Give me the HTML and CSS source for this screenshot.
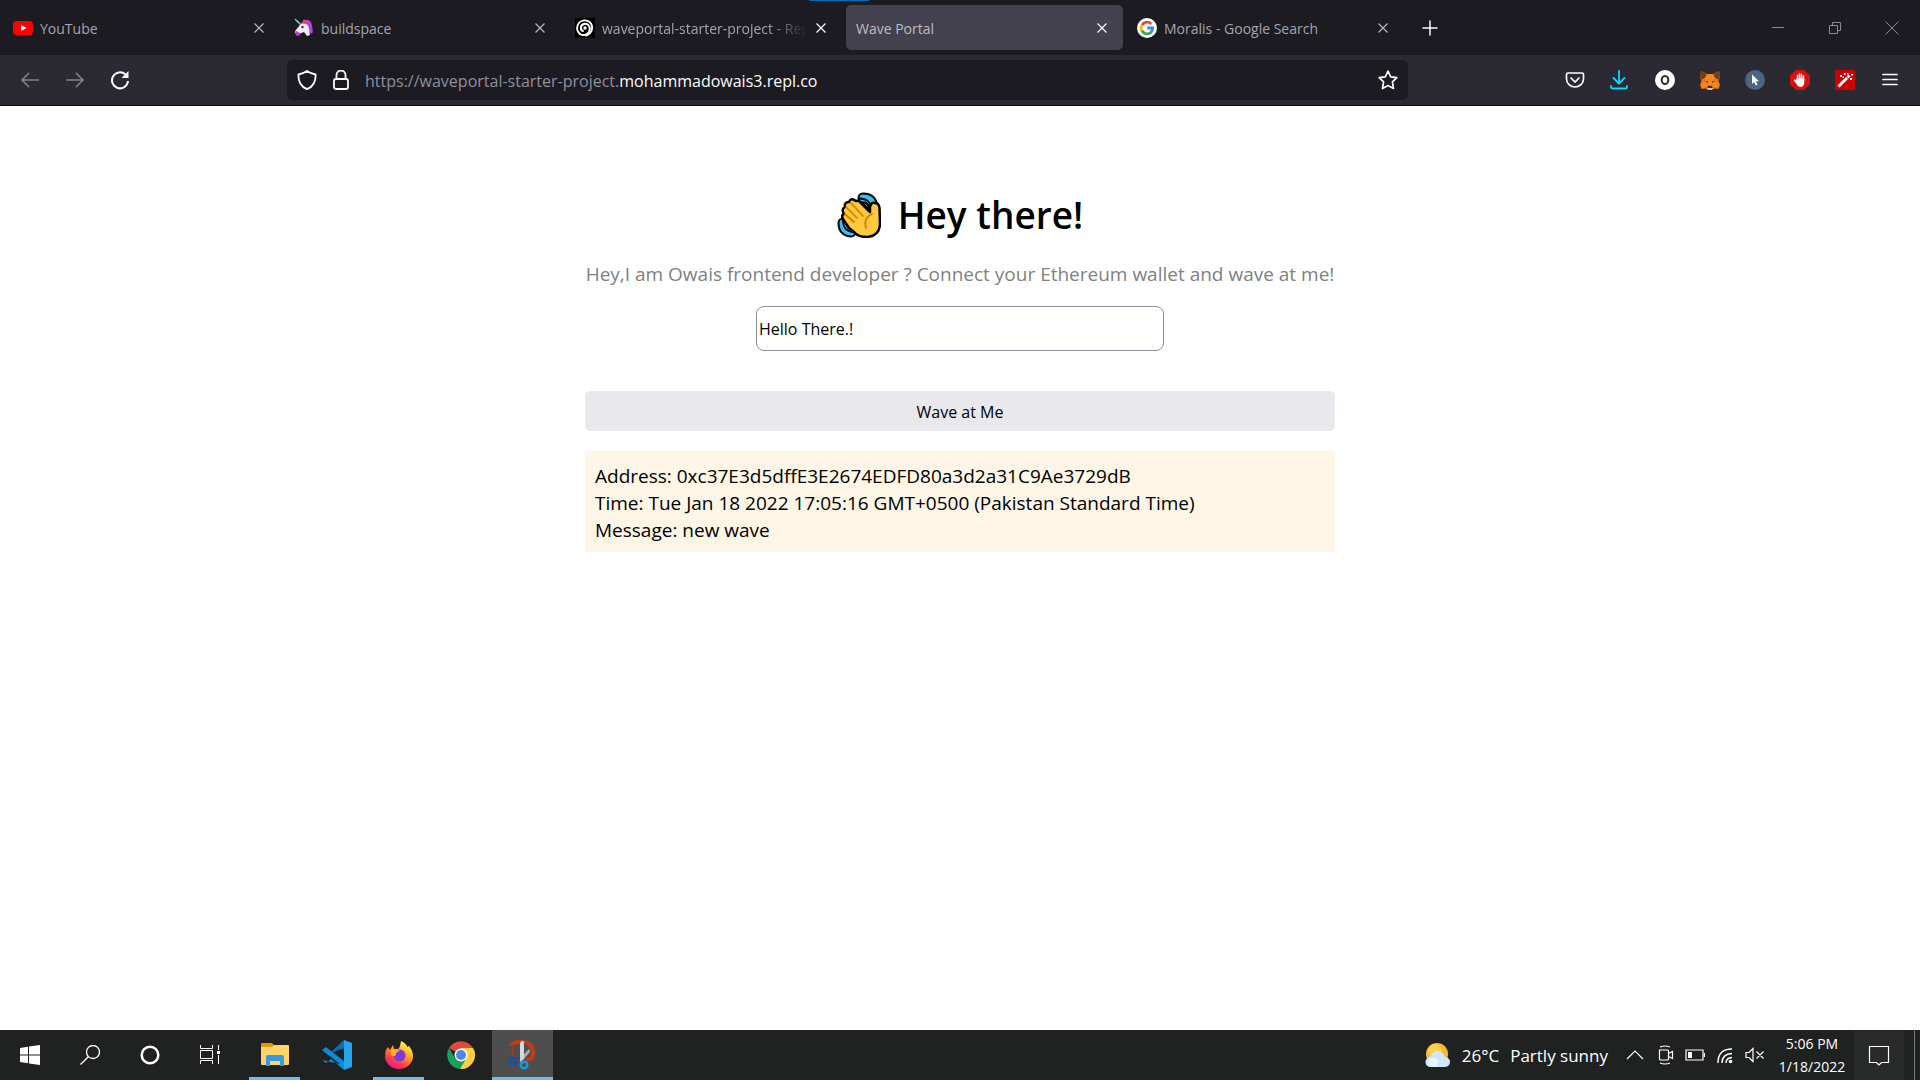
FILE: index.html
```html
<!DOCTYPE html>
<html lang="en">
<head>
<meta charset="utf-8">
<title>Wave Portal</title>
<link rel="stylesheet" href="styles.css">
</head>
<body>
<svg class="defs" aria-hidden="true">
  <symbol id="close" viewBox="0 0 12 12"><path d="M1.500 1.500l9 9M10.500 1.500l-9 9" stroke="currentColor" stroke-width="1.200" fill="none"/></symbol>
</svg>
<header class="browser">
  <nav class="tab-bar" aria-label="Tabs">
    <div class="tab">
      <svg class="favicon" viewBox="0 0 20 20"><rect x="0" y="3" width="20" height="14" rx="3.500" fill="#f00"/><path d="M8 7l5.500 3L8 13z" fill="#fff"/></svg>
      <a class="tab-title" href="#">YouTube</a>
      <button class="tab-close" aria-label="Close YouTube"><svg><use href="#close"/></svg></button>
    </div>
    <div class="tab">
      <svg class="favicon" viewBox="0 0 20 20">
        <path d="M8 3c6-3 10 0 10 5 1 4 1 6 0 8l-3-2-4-8z" fill="#b43fd6"/>
        <path d="M6 6c5-2 9 1 9 5l1 6-3 1-3-4-5 2-4-1c-1-3 4-5 5-9z" fill="#f1e8f6"/>
        <path d="M1.500 12.500l5 3c-1 3-4 3-5 1z" fill="#b43fd6"/>
        <path d="M8 5l2-4 2 3 2-2-1 4zM4 4l4 1-2 2z" fill="#df4a6c"/>
        <path d="M1 1l5 5" stroke="#4fd4a1" stroke-width="1.500"/><path d="M3 3l1 1" stroke="#ffd15c" stroke-width="1.500"/>
        <circle cx="8.500" cy="9" r="1.200" fill="#333"/>
      </svg>
      <a class="tab-title" href="#">buildspace</a>
      <button class="tab-close" aria-label="Close buildspace"><svg><use href="#close"/></svg></button>
    </div>
    <div class="tab">
      <svg class="favicon" viewBox="0 0 20 20"><path fill="#000" d="M0 0h20v20H0z"/><g fill="none" stroke="#fff" stroke-linecap="round"><path stroke-width="2" d="M8 13c-3-1-3-6 1-7 5-1 7 4 5 8-2 3-6 4-9 2"/><path stroke-width="1.800" d="M5 16C0 12 2 4 8 2.500q5-1 8 3c3 5 0 11-5 12"/></g><circle cx="10" cy="10" r="1.700" fill="#fff"/></svg>
      <a class="tab-title fade" href="#">waveportal-starter-project - Replit</a>
      <button class="tab-close bright" aria-label="Close waveportal-starter-project"><svg><use href="#close"/></svg></button>
    </div>
    <div class="tab active">
      <a class="tab-title" href="#">Wave Portal</a>
      <button class="tab-close bright" aria-label="Close Wave Portal"><svg><use href="#close"/></svg></button>
    </div>
    <div class="tab">
      <svg class="favicon" viewBox="0 0 20 20"><circle cx="10" cy="10" r="10" fill="#fff"/><g fill="none" stroke-width="2.800"><path d="M5 7.200A5.700 5.700 0 0 1 14.200 6" stroke="#ea4335"/><path d="M5 7A6 6 0 0 0 5 13" stroke="#fbbc05"/><path d="M4.900 12.700A5.800 5.800 0 0 0 14 14.300" stroke="#34a853"/><path d="M10.200 10h5.500q0 2.800-2 4.600" stroke="#4285f4"/></g></svg>
      <a class="tab-title" href="#">Moralis - Google Search</a>
      <button class="tab-close" aria-label="Close Moralis"><svg><use href="#close"/></svg></button>
    </div>
    <button class="new-tab" aria-label="New tab"><svg viewBox="0 0 16 16"><path d="M8 .5v15M.5 8h15" stroke="#fbfbfe" stroke-width="1.500"/></svg></button>
    <div class="window-controls">
      <button aria-label="Minimize"><svg viewBox="0 0 14 14"><path d="M1 6.500h12"/></svg></button>
      <button aria-label="Restore"><svg viewBox="0 0 14 14"><path d="M1.500 4.500h8v8h-8zM4.500 4.500v-3h8v8h-3"/></svg></button>
      <button aria-label="Close"><svg viewBox="0 0 14 14"><path d="M.5 .5l13 13M13.500 .5l-13 13"/></svg></button>
    </div>
    <span class="drag-mark"></span>
  </nav>
  <div class="toolbar">
    <div class="nav-buttons">
      <button class="dim" aria-label="Back"><svg viewBox="0 0 20 20"><path d="M19 10H2M9 3l-7 7 7 7"/></svg></button>
      <button class="dim" aria-label="Forward"><svg viewBox="0 0 20 20"><path d="M1 10h17M11 3l7 7-7 7"/></svg></button>
      <button aria-label="Reload"><svg viewBox="0 0 20 20"><path stroke-width="2" d="M18 11a8 8 0 1 1-2.500-6.500"/><path d="M18.500 1v7h-7z" fill="currentColor" stroke="none"/></svg></button>
    </div>
    <div class="address">
      <button aria-label="Protection"><svg viewBox="0 0 20 20"><path stroke-width="1.800" d="M10 1c3 2 5 3 8.500 3.500C19 11 16 17 10 19.200 4 17 1 11 1.500 4.500 5 4 7 3 10 1z"/></svg></button>
      <button aria-label="Connection secure"><svg viewBox="0 0 20 20"><rect x="3" y="9" width="14" height="10" rx="2" stroke-width="1.800"/><path stroke-width="1.800" d="M5.500 9V5a4.500 4.500 0 0 1 9 0v4"/></svg></button>
      <div class="url" role="textbox" aria-label="Address">https://waveportal-starter-project.<span>mohammadowais3.repl.co</span></div>
      <button aria-label="Bookmark"><svg viewBox="0 0 20 20"><path stroke-width="1.700" stroke-linejoin="round" d="M10 1.200l2.700 5.600 6.200.8-4.500 4.300 1.100 6.600L10 15.600l-5.500 2.900 1.100-6.600L1.100 7.600l6.200-.8z"/></svg></button>
    </div>
    <div class="extensions">
      <button aria-label="Pocket"><svg viewBox="0 0 20 20"><path stroke-width="1.700" d="M3 3h14q1.500 0 1.500 1.500V9a8.500 8 0 0 1-17 0V4.500Q1.500 3 3 3z"/><path stroke-width="1.700" stroke-linecap="round" d="M6 8l4 4 4-4"/></svg></button>
      <button class="cyan" aria-label="Downloads"><svg viewBox="0 0 20 20"><path stroke-width="1.800" stroke-linecap="round" stroke-linejoin="round" d="M9 1v12M3.500 8L9 13.500 14.500 8M1 16v1q0 1.500 1.500 1.500h13q1.500 0 1.500-1.500v-1"/></svg></button>
      <button aria-label="Extension O"><svg viewBox="0 0 20 20"><circle cx="10" cy="10" r="10" fill="#fff" stroke="none"/><ellipse cx="10" cy="10" rx="3.300" ry="4" stroke="#2b2a33" stroke-width="2"/></svg></button>
      <button aria-label="MetaMask"><svg viewBox="0 0 20 20" stroke="none"><path fill="#e2761b" d="M1 1l6 3h6l6-3 1 6-1.500 4 1.500 4-1.500 4-4-.5L12 20H8l-2.500-1.500-4 .5L0 15l1.500-4L0 7z"/><path fill="#763d16" d="M1 1l6 3.500L5 8 1 9.500 0 6zM19 1l-6 3.500L15 8l4 1.500L20 6z"/><path fill="#f6851b" d="M7 4h6l2 4-3 7H8L5 8zM1 13l5-1 2 5-6 1zM19 13l-5-1-2 5 6 1z"/><path fill="#233447" d="M5.500 11l2.500.5-.5 1.500zM14.500 11l-2.500.5.5 1.500zM8 16h4l.5 2h-5z"/><path fill="#d7c1b3" d="M7 18h6l-1.500 2h-3z"/></svg></button>
      <button aria-label="Cursor extension"><svg viewBox="0 0 20 20" stroke="none"><circle cx="10" cy="10" r="10" fill="#4c6486"/><path fill="#fff" d="M7 4.500v9.500l2-2 1.700 3.500 1.800-.9-1.600-3.300H14z"/></svg></button>
      <button aria-label="Ad blocker"><svg viewBox="0 0 20 20" stroke="none"><path fill="#e40d0d" d="M6 0h8l6 6v8l-6 6H6l-6-6V6z"/><path d="M7.500 10V5.500M9.500 9V3.800M11.500 9V4.200M13.500 10V6M6 12l-1.500-2" stroke="#fff" stroke-width="1.500" stroke-linecap="round"/><path fill="#fff" d="M6.700 8.500h7.600V12q0 4.500-3.500 5-3 0-4.300-3l-1.500-3z"/></svg></button>
      <button aria-label="Magic wand"><svg viewBox="0 0 20 20" stroke="none"><rect width="20" height="20" rx="1" fill="#cc0202"/><path d="M3.500 16.500L12 8" stroke="#fff" stroke-width="2.800"/><path d="M12.500 7.500l2-2" stroke="#fff" stroke-width="2.500"/><path fill="#fff" d="M5 5h2v2H5zM9 3h1.500v2H9zM12 3h1.500v1.500H12zM16 4h2v1.500h-2zM15 8h2v2h-2zM7.500 6.500h1.500V8H7.500z"/></svg></button>
      <button aria-label="Menu"><svg viewBox="0 0 20 20"><path stroke-width="1.700" stroke-linecap="round" d="M3 4.500h14M3 9.500h14M3 14.500h14"/></svg></button>
    </div>
  </div>
</header>

<main class="page">
  <div class="content">
    <h1 class="title">
      <svg class="wave" viewBox="0 0 44 46" role="img" aria-label="Waving hand">
        <g fill="none"><path stroke="#000" stroke-width="11" stroke-linecap="round" d="M26 6q9 0 10 9M6 31q0 8 8 9"/><path stroke="#35c1f1" stroke-width="7" stroke-linecap="round" d="M26 6q9 0 10 9M6 31q0 8 8 9"/><path stroke="#000" stroke-width="1.800" d="M22 6.500q12 0 13 12M6 28q0 11 10 12M21 11q9 0 10 9M11 30q0 6 7 7"/></g>
        <path fill="#ffc83d" stroke="#000" stroke-width="2.500" stroke-linejoin="round" d="M12 36L6 27q-2-4 1-5-3-5 1-7-1-5 4-5 2-5 7-1 3-1 5 2l9 9v-5q1-5 5-4 4 0 4.500 5l.5 15q0 13-13 14-9 0-13-5z"/>
        <path fill="none" stroke="#d67d00" stroke-width="1.700" stroke-linecap="round" d="M8 22l9 8M9 15l11 11M14 11l12 13M35 22q-9 4-6 14"/>
      </svg>
      Hey there!
    </h1>
    <p class="bio">Hey,I am Owais frontend developer ? Connect your Ethereum wallet and wave at me!</p>
    <input class="message" type="text" value="Hello There.!" aria-label="Message">
    <button class="wave-button">Wave at Me</button>
    <section class="wave-card">
      <div>Address: 0xc37E3d5dffE3E2674EDFD80a3d2a31C9Ae3729dB</div>
      <div>Time: Tue Jan 18 2022 17:05:16 GMT+0500 (Pakistan Standard Time)</div>
      <div>Message: new wave</div>
    </section>
  </div>
</main>

<footer class="taskbar">
  <div class="system-buttons">
    <button aria-label="Start"><svg viewBox="0 0 20 20"><path fill="#fff" d="M0 3l8-1.200V9.500H0zM9 1.600L20 0v9.500H9zM0 10.500h8v7.700L0 17zM9 10.500h11V20L9 18.400z"/></svg></button>
    <button aria-label="Search"><svg viewBox="0 0 20 20"><g fill="none" stroke="#fff" stroke-width="1.300"><circle cx="13" cy="7" r="6.500"/><path d="M8.300 11.700L.5 19.500"/></g></svg></button>
    <button aria-label="Cortana"><svg viewBox="0 0 20 20"><circle cx="10" cy="10" r="8.300" fill="none" stroke="#fff" stroke-width="2.500"/></svg></button>
    <button aria-label="Task view"><svg viewBox="0 0 20 20"><path fill="none" stroke="#fff" d="M.5 0v3.500h12V0M.5 5.500h12v8H.5zM.5 19v-3.500h12V19M18.500 0v5M18.500 10v9"/><path fill="#fff" d="M17 6h3v3h-3z"/></svg></button>
  </div>
  <div class="apps">
    <button class="running" aria-label="File Explorer"><svg viewBox="0 0 30 30"><path fill="#e09a00" d="M1 4q0-1 1-1h10l2 2v4H1z"/><path fill="#ffd566" d="M1 7h11l2-2h14q1 0 1 1v18q0 1-1 1H2q-1 0-1-1z"/><path fill="#3c97de" d="M6 26V17q0-2 2-2h14q2 0 2 2v9h-4v-5h-10v5z"/></svg></button>
    <button aria-label="Visual Studio Code"><svg viewBox="0 0 30 30"><path fill="#0072ba" d="M22 0L9 12 4 8 0 10l6 5 3-2L22 8z"/><path fill="#0b8bd5" d="M0 20l4 3 5-4 13 11V21L4 7 0 10l18 14z"/><path fill="#25a5ef" d="M22 0l8 3v24l-8 3z"/></svg></button>
    <button class="running" aria-label="Firefox"><svg viewBox="0 0 30 30"><defs><linearGradient id="ff" x1=".8" y1=".1" x2=".3" y2="1"><stop offset="0" stop-color="#fff44f"/><stop offset=".4" stop-color="#ff9a20"/><stop offset=".75" stop-color="#ff374f"/><stop offset="1" stop-color="#e41b8e"/></linearGradient></defs><path fill="url(#ff)" d="M17 1q6 3 6 6l2-1q4 5 4 10a14 13 0 0 1-28 0q0-6 3-9l2 3 3-5 1 4h4q2-1 3-8z"/><circle cx="15.500" cy="15.500" r="6" fill="#7b3bd5"/><path fill="#ffab26" d="M7 10q5-2 9 1-4 1-4 3 0 2-3 2-3-1-2-6z"/></svg></button>
    <button aria-label="Chrome"><svg viewBox="0 0 30 30"><path fill="#db4c3f" d="M15 15L3 8a14 14 0 0 1 24 0z"/><path fill="#ffce43" d="M15 15V8h12.100A14 14 0 0 1 14 29z"/><path fill="#17a05e" d="M15 15l5 4-6 10A14 14 0 0 1 3 8l6 10z"/><circle cx="15" cy="15" r="6.500" fill="#fff"/><circle cx="15" cy="15" r="5" fill="#4a87f5"/></svg></button>
    <button class="running current" aria-label="Snipping Tool"><svg viewBox="0 0 30 30"><path fill="#cc3b0d" d="M2 4q3-4 10-4 13 0 15 11 1 9-7 11l-3-3q7-1 6-8-2-8-10-8-5 2-10 3-2 0-1-2z"/><path fill="none" stroke="#a83a1c" stroke-width="2" d="M6 7q-4 6 1 11l5 3"/><path fill="#d5d8da" d="M12 3q2-4 4-1v17l-4 3z"/><path fill="#a9acae" d="M21 9q2 2 0 4l-5 6v-5z"/><g fill="none" stroke-width="2.500"><circle cx="5" cy="21" r="3.300" stroke="#0b55ad"/><circle cx="16" cy="25" r="3.300" stroke="#1b94e5"/><path d="M8 19l4-1" stroke="#0b55ad"/></g></svg></button>
  </div>
  <div class="tray">
    <button class="weather"><svg viewBox="0 0 26 26"><circle cx="12" cy="12" r="11" fill="#fdb92e"/><circle cx="10" cy="9" r="7" fill="#ffd04b"/><path fill="#cfe8fa" d="M6 25a5 5 0 0 1-1-10q2-6 8-6 5 0 7 6a5 5 0 0 1 0 10z"/><path fill="#fff" opacity=".5" d="M6 25a5 5 0 0 1 0-9q5-1 8 3l-3 6z"/></svg><span>26°C</span><span>Partly sunny</span></button>
    <div class="tray-icons">
      <button aria-label="Show hidden icons"><svg viewBox="0 0 20 20"><path d="M2 14l8-8 8 8"/></svg></button>
      <button aria-label="Meet now"><svg viewBox="0 0 20 20"><path d="M4.500 5h8q1 0 1 1v8q0 1-1 1h-7q-1 0-1-1zM13.500 8.500l4-2v7l-4-2M5 2q5-2 10 0M5 18q5 2 10 0"/></svg></button>
      <button aria-label="Battery"><svg viewBox="0 0 20 20"><path d="M1 5h17v10H1zM19.500 8v4"/><path fill="#fff" stroke="none" d="M3 7h4v6H3z"/></svg></button>
      <button aria-label="Network"><svg viewBox="0 0 20 20"><path d="M3 18Q3 4 17 4M7 18q0-9 10-9.500M11 18q0-5 6-5.500" stroke-width="1.400"/><circle cx="15.500" cy="16.500" r="1.800" fill="#fff" stroke="none"/></svg></button>
      <button aria-label="Volume muted"><svg viewBox="0 0 20 20"><path d="M1 7.500h3l4-4v13l-4-4H1zM11.500 6.500l7 7M18.500 6.500l-7 7"/></svg></button>
    </div>
    <button class="clock"><span>5:06 PM</span><span>1/18/2022</span></button>
    <button class="notifications" aria-label="Notifications"><svg viewBox="0 0 22 22"><path d="M1.500 2.500h19v16h-7l-2.500 2.500-2.500-2.500h-7z"/></svg></button>
    <button class="show-desktop" aria-label="Show desktop"></button>
  </div>
</footer>
</body>
</html>
```
FILE: styles.css
```css
* { box-sizing: border-box; }

body {
  margin: 0;
  min-height: 100vh;
  display: flex;
  flex-direction: column;
  background: #fff;
  font-family: "Open Sans", "Noto Sans", sans-serif;
}

button {
  border: 0;
  padding: 0;
  background: none;
  color: inherit;
  font: inherit;
}

svg { display: block; }
.defs { display: none; }

/* Browser chrome */
.browser { color: #fbfbfe; border-bottom: 1px solid #0c0c0d; }

.tab-bar {
  position: relative;
  display: flex;
  align-items: center;
  gap: 4px;
  height: 55px;
  padding-left: 3px;
  background: #1c1b22;
  font-size: 14px;
}

.tab {
  flex: 0 1 277px;
  min-width: 0;
  height: 45px;
  display: flex;
  align-items: center;
  gap: 7px;
  padding: 0 15px 0 10px;
  border-radius: 5px;
}
.tab.active { background: #42414d; }

.favicon { flex: none; width: 20px; height: 20px; }

.tab-title {
  flex: 1;
  min-width: 0;
  padding-top: 2px;
  overflow: hidden;
  white-space: nowrap;
  line-height: 20px;
  color: #a5a5ac;
  text-decoration: none;
}
.tab.active .tab-title { color: #bdbdc4; }
.tab-title.fade {
  -webkit-mask-image: linear-gradient(to left, transparent, #000 40px);
  mask-image: linear-gradient(to left, transparent, #000 40px);
}

.tab-close { flex: none; color: #b4b4ba; }
.tab-close.bright { color: #fbfbfe; }
.tab-close svg { width: 12px; height: 12px; }

.new-tab { margin-left: 14px; }
.new-tab svg { width: 16px; height: 16px; }

.window-controls {
  display: flex;
  align-items: center;
  margin: 0 0 0 auto;
}
.window-controls button {
  width: 57px;
  display: flex;
  justify-content: center;
}
.window-controls svg {
  width: 14px;
  height: 14px;
  fill: none;
  stroke: #8c8b90;
}

.drag-mark {
  position: absolute;
  top: 0;
  left: 809px;
  width: 60px;
  height: 1px;
  background: #0067b8;
}

.toolbar {
  display: grid;
  grid-template-columns: 287fr 1121fr 512fr;
  align-items: center;
  height: 50px;
  background: #2b2a33;
}
.toolbar svg {
  width: 20px;
  height: 20px;
  fill: none;
  stroke: currentColor;
  stroke-width: 1.5px;
}
.toolbar svg[stroke="none"] { stroke: none; }

.nav-buttons { display: flex; gap: 25px; padding-left: 20px; }
.dim { color: #85848b; }
.cyan { color: #00ddff; }

.address {
  display: flex;
  align-items: center;
  height: 40px;
  gap: 14px;
  padding: 0 10px;
  border-radius: 5px;
  background: #1c1b22;
}
.url {
  flex: 1;
  padding-top: 2px;
  font-size: 16px;
  line-height: 24px;
  color: #8f8f9d;
  white-space: nowrap;
}
.url span { color: #fbfbfe; }

.extensions {
  display: flex;
  justify-content: flex-end;
  gap: 25px;
  padding-right: 20px;
}

/* Page content */
.page {
  flex: 1;
  display: flex;
  justify-content: center;
  padding: 80px 16px 40px;
}
.content {
  width: 100%;
  max-width: 750px;
  display: flex;
  flex-direction: column;
}
.title {
  display: flex;
  justify-content: center;
  align-items: center;
  gap: 17px;
  margin: 0;
  font-size: 37px;
  font-weight: 600;
  line-height: 58px;
}
.wave { width: 44px; height: 46px; }
.bio {
  margin: 14px 0 0;
  font-size: 19px;
  line-height: 32px;
  color: #808080;
  text-align: center;
}
.message {
  align-self: center;
  width: 408px;
  height: 45px;
  max-width: 100%;
  margin-top: 16px;
  padding: 0 2px;
  border: 1px solid #8f8f9d;
  border-radius: 8px;
  background: #fff;
  color: #000;
  font: 16px "Open Sans", "Noto Sans", sans-serif;
}
.wave-button {
  height: 40px;
  margin-top: 40px;
  padding-top: 1px;
  border-radius: 5px;
  background: #e9e9ed;
  color: #000;
  font-size: 16px;
}
.wave-card {
  margin-top: 20px;
  padding: 12px 10px 8px;
  background: #fdf5e6;
  color: #000;
  font-size: 19px;
  line-height: 27px;
}

/* Taskbar */
.taskbar {
  display: flex;
  height: 50px;
  background: #202121;
  color: #fff;
}
.taskbar button {
  display: flex;
  align-items: center;
  justify-content: center;
}
.system-buttons { display: flex; }
.system-buttons button { width: 60px; }
.system-buttons svg { width: 20px; height: 20px; }

.apps { display: flex; gap: 1px; margin-left: 4px; }
.apps button { position: relative; width: 61px; }
.apps svg { width: 30px; height: 30px; }
.apps .running::after {
  content: "";
  position: absolute;
  bottom: 0;
  left: 5px;
  right: 5px;
  height: 3px;
  background: #76b9ed;
}
.apps .current { background: #4e4e4e; }
.apps .current::after { left: 0; right: 0; }

.tray { display: flex; margin-left: auto; }
.weather { gap: 11px; margin-right: 17px; font-size: 17px; }
.weather svg { width: 26px; height: 26px; }
.tray-icons { display: flex; gap: 10px; }
.tray-icons svg,
.notifications svg {
  width: 20px;
  height: 20px;
  fill: none;
  stroke: #fff;
  stroke-width: 1.2px;
}
.tray .clock {
  flex-direction: column;
  width: 84px;
  margin-left: 5px;
  font-size: 14px;
  line-height: 23px;
}
.notifications { width: 50px; background: #292b2b; }
.notifications svg { width: 22px; height: 22px; }
.show-desktop { width: 6px; margin-left: 10px; border-left: 1px solid #77787a; }
```
